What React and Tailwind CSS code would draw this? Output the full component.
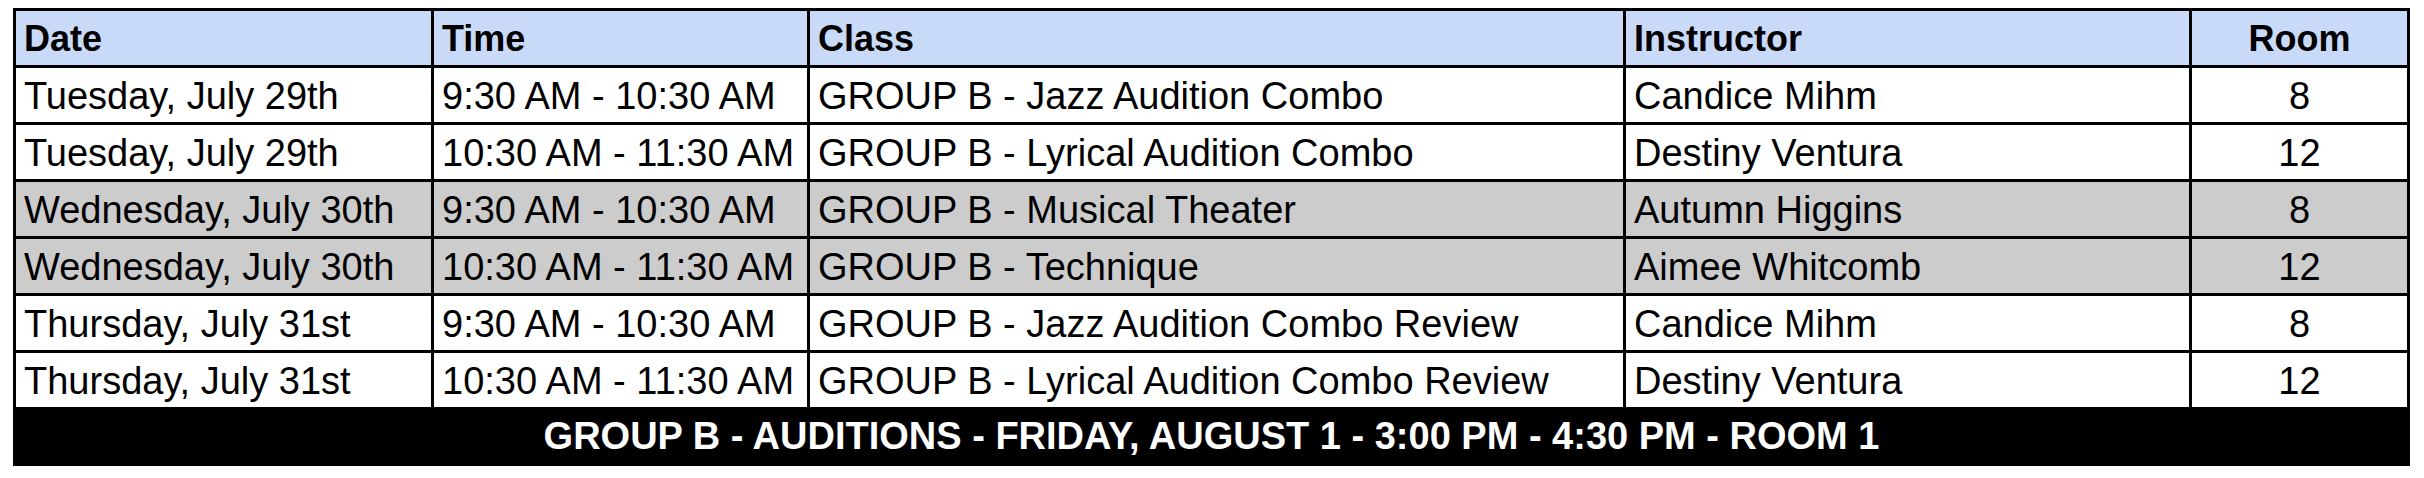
import React from 'react';

const rows = [
  { date: 'Tuesday, July 29th', time: '9:30 AM - 10:30 AM', cls: 'GROUP B - Jazz Audition Combo', who: 'Candice Mihm', room: '8' },
  { date: 'Tuesday, July 29th', time: '10:30 AM - 11:30 AM', cls: 'GROUP B - Lyrical Audition Combo', who: 'Destiny Ventura', room: '12' },
  { date: 'Wednesday, July 30th', time: '9:30 AM - 10:30 AM', cls: 'GROUP B - Musical Theater', who: 'Autumn Higgins', room: '8', grey: true },
  { date: 'Wednesday, July 30th', time: '10:30 AM - 11:30 AM', cls: 'GROUP B - Technique', who: 'Aimee Whitcomb', room: '12', grey: true },
  { date: 'Thursday, July 31st', time: '9:30 AM - 10:30 AM', cls: 'GROUP B - Jazz Audition Combo Review', who: 'Candice Mihm', room: '8' },
  { date: 'Thursday, July 31st', time: '10:30 AM - 11:30 AM', cls: 'GROUP B - Lyrical Audition Combo Review', who: 'Destiny Ventura', room: '12' },
];

const App = () => {
  return (
    <div className="w-[2424px] h-[478px] bg-white pt-[8px] pl-[13px]" style={{ fontFamily: '"Liberation Sans", Arial, sans-serif' }}>
      <div className="w-[2397px] bg-black p-[3px] grid grid-cols-[415px_373px_813px_563px_215px] gap-[3px] text-black">
        {/* header */}
        <div className="bg-[#c9daf8] h-[54px] flex items-center pl-[8px] pt-[2px] text-[36px] font-bold">Date</div>
        <div className="bg-[#c9daf8] h-[54px] flex items-center pl-[8px] pt-[2px] text-[36px] font-bold">Time</div>
        <div className="bg-[#c9daf8] h-[54px] flex items-center pl-[8px] pt-[2px] text-[36px] font-bold">Class</div>
        <div className="bg-[#c9daf8] h-[54px] flex items-center pl-[8px] pt-[2px] text-[36px] font-bold">Instructor</div>
        <div className="bg-[#c9daf8] h-[54px] flex items-center justify-center pt-[2px] text-[36px] font-bold">Room</div>

        {rows.map((r, i) => {
          const bg = r.grey ? 'bg-[#cccccc]' : 'bg-white';
          return (
            <React.Fragment key={i}>
              <div className={`${bg} h-[54px] flex items-center pl-[8px] pt-[2px] text-[38px] whitespace-nowrap`}>{r.date}</div>
              <div className={`${bg} h-[54px] flex items-center pl-[8px] pt-[2px] text-[38px] whitespace-nowrap`}>{r.time}</div>
              <div className={`${bg} h-[54px] flex items-center pl-[8px] pt-[2px] text-[38px] whitespace-nowrap`}>{r.cls}</div>
              <div className={`${bg} h-[54px] flex items-center pl-[8px] pt-[2px] text-[38px] whitespace-nowrap`}>{r.who}</div>
              <div className={`${bg} h-[54px] flex items-center justify-center pt-[2px] text-[38px]`}>{r.room}</div>
            </React.Fragment>
          );
        })}

        {/* footer banner */}
        <div className="col-span-5 h-[56px] -mt-[3px] flex items-center justify-center pt-[2px] text-white font-bold text-[38px] whitespace-nowrap">
          GROUP B - AUDITIONS - FRIDAY, AUGUST 1 - 3:00 PM - 4:30 PM - ROOM 1
        </div>
      </div>
    </div>
  );
};

export default App;
